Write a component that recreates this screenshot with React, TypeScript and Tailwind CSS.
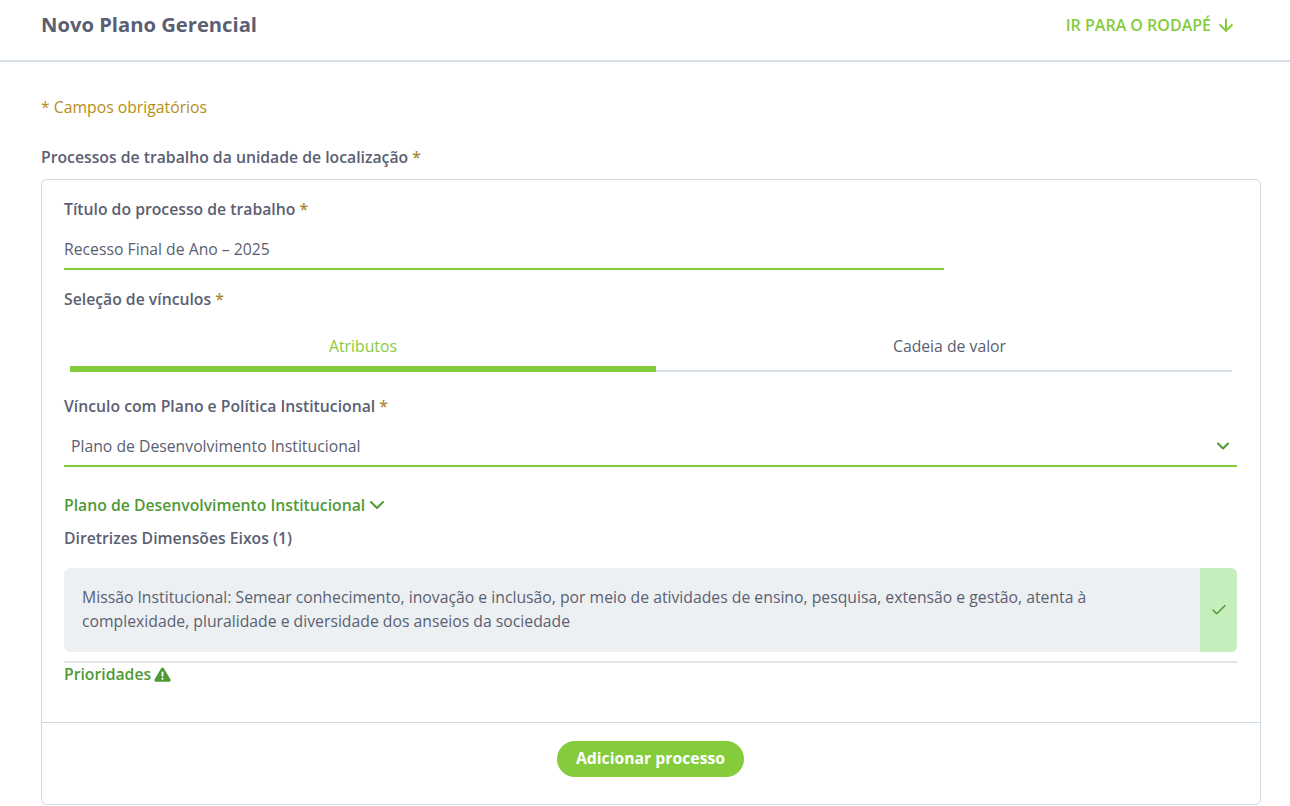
import { ArrowDown, Check, ChevronDown } from "lucide-react";

function Req({ label, className = "" }: { label: string; className?: string }) {
  return (
    <div className={`text-[15.75px] leading-[20px] font-semibold text-[#5a6072] ${className}`}>
      {label} <span className="text-[#a8893a]">*</span>
    </div>
  );
}

export default function App() {
  return (
    <div className="h-[806px] overflow-hidden bg-white font-['Open_Sans','Noto_Sans',sans-serif] text-[#5a6072]">
      <header className="flex h-[62px] items-center justify-between border-b-2 border-[#d6deE8] pb-[11px] pl-[41px] pr-[54px]">
        <h1 className="mb-[2px] text-[20.2px] leading-[26px] font-bold">Novo Plano Gerencial</h1>
        <a className="flex items-center gap-[5px] text-[16px] leading-[20px] font-semibold text-[#84cc3c]">
          IR PARA O RODAPÉ
          <ArrowDown className="h-[20px] w-[20px]" strokeWidth={2.4} />
        </a>
      </header>

      <main className="pl-[41px] pr-[29px]">
        <p className="mt-[35px] text-[15.75px] leading-[20px] text-[#b58d14]">* Campos obrigatórios</p>
        <Req label="Processos de trabalho da unidade de localização" className="mt-[30px]" />

        <section className="mt-[12px] h-[626px] rounded-[6px] border border-[#cfd8e3]">
          <div className="pl-[22px] pr-[23px] pt-[19px]">
            <Req label="Título do processo de trabalho" />
            <div className="mt-[19px] h-[32px] w-[880px] border-b-2 border-[#84cc3c] pt-[1px] text-[15.75px] leading-[20px]">
              Recesso Final de Ano – 2025
            </div>
            <Req label="Seleção de vínculos" className="mt-[19px]" />

            <div className="mt-[26px] ml-[6px] mr-[5px] flex text-[15.75px] leading-[20px]">
              <div className="h-[37px] w-[586px] border-b-[6px] border-[#84cc3c] pt-[1px] text-center text-[#84cc3c]">Atributos</div>
              <div className="h-[37px] flex-1 border-b-2 border-[#d6deE8] pl-[11px] pt-[1px] text-center">Cadeia de valor</div>
            </div>

            <Req label="Vínculo com Plano e Política Institucional" className="mt-[24px]" />
            <div className="mt-[20px] flex h-[31px] items-start justify-between border-b-2 border-[#84cc3c] pl-[7px] pr-[4px] text-[15.75px] leading-[20px]">
              Plano de Desenvolvimento Institucional
              <ChevronDown className="h-[20px] w-[20px] text-[#4f9a35]" strokeWidth={2.5} />
            </div>

            <div className="mt-[26px] flex items-center text-[15.75px] leading-[20px] font-semibold text-[#4f9a35]">
              Plano de Desenvolvimento Institucional
              <ChevronDown className="h-[24px] w-[24px]" strokeWidth={2} />
            </div>
            <div className="mt-[11px] text-[15.75px] leading-[20px] font-semibold">Diretrizes Dimensões Eixos (1)</div>

            <div className="mt-[20px] flex h-[84px] overflow-hidden rounded-[6px] bg-[#edf0f3]">
              <p className="flex-1 pl-[18px] pr-[100px] pt-[17px] text-[15.75px] leading-[24px]">
                Missão Institucional: Semear conhecimento, inovação e inclusão, por meio de atividades de ensino, pesquisa, extensão e gestão, atenta à complexidade, pluralidade e diversidade dos anseios da sociedade
              </p>
              <div className="flex w-[37px] items-center justify-center bg-[#c6edbc]">
                <Check className="h-[18px] w-[18px] text-[#4f9a35]" strokeWidth={2} />
              </div>
            </div>

            <div className="mt-[9px] border-t-2 border-[#e3e5e8] pt-[1px]">
              <div className="flex items-center gap-[3px] text-[15.75px] leading-[20px] font-semibold text-[#4f9a35]">
                Prioridades
                <svg viewBox="0 0 17 15" className="h-[15px] w-[17px]" aria-hidden="true">
                  <path d="M8.5 0.5c.5 0 1 .3 1.3.8l6.7 11.3c.6 1-.1 2.2-1.3 2.2H1.8c-1.2 0-1.9-1.2-1.3-2.2L7.2 1.3c.3-.5.8-.8 1.3-.8z" fill="#4f9a35" />
                  <rect x="7.6" y="4.5" width="1.8" height="5.2" rx="0.8" fill="#fff" />
                  <circle cx="8.5" cy="11.8" r="1.1" fill="#fff" />
                </svg>
              </div>
            </div>
          </div>

          <div className="mt-[38px] flex justify-center border-t border-[#cfd8e3] pr-[1px] pt-[18px]">
            <button className="h-[36px] w-[187px] rounded-full bg-[#84cc3c] text-[15.75px] font-bold text-white">
              Adicionar processo
            </button>
          </div>
        </section>
      </main>
    </div>
  );
}
